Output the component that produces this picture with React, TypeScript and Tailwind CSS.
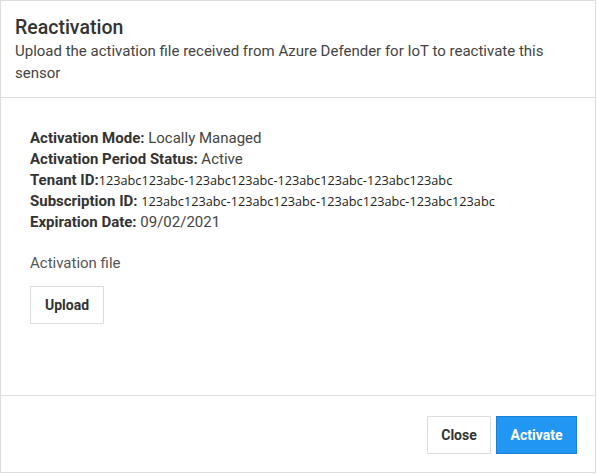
import React from "react";

export default function App() {
  const roboto = { fontFamily: "Roboto, 'Liberation Sans', sans-serif" };
  const mono = { fontFamily: "'Open Sans', 'Noto Sans', sans-serif" };
  return (
    <div className="w-[597px] h-[474px] bg-white" style={roboto}>
      <div className="w-[596px] h-[473px] border border-[#dddddd] flex flex-col">
        <div className="h-[97px] border-b border-[#dddddd] px-[14px] pt-[15px] shrink-0">
          <div className="text-[19.5px] leading-[24px] font-medium text-[#333333]">Reactivation</div>
          <div className="text-[15px] leading-[22px] text-[#444444]">
            Upload the activation file received from Azure Defender for IoT to reactivate this sensor
          </div>
        </div>
        <div className="flex-1 px-[29px] pt-[30px]">
          <div className="text-[15px] leading-[21px] text-[#444444]">
            <div>
              <span className="font-bold text-[#333333]">Activation Mode:</span> Locally Managed
            </div>
            <div>
              <span className="font-bold text-[#333333]">Activation Period Status:</span> Active
            </div>
            <div>
              <span className="font-bold text-[#333333]">Tenant ID:</span>
              <span className="text-[12.7px] text-[#222222]" style={mono}>
                123abc123abc-123abc123abc-123abc123abc-123abc123abc
              </span>
            </div>
            <div>
              <span className="font-bold text-[#333333]">Subscription ID:</span>{" "}
              <span className="text-[12.7px] text-[#222222]" style={mono}>
                123abc123abc-123abc123abc-123abc123abc-123abc123abc
              </span>
            </div>
            <div>
              <span className="font-bold text-[#333333]">Expiration Date:</span> 09/02/2021
            </div>
          </div>
          <div className="mt-[20px] text-[15px] leading-[21px] text-[#555555]">Activation file</div>
          <button className="mt-[12px] w-[74px] h-[38px] border border-[#dddddd] bg-white text-[14px] font-bold text-[#333333]">
            Upload
          </button>
        </div>
        <div className="h-[77px] border-t border-[#dddddd] shrink-0 flex items-center justify-end gap-[5px] pr-[18px] pt-[2px]">
          <button className="w-[64px] h-[38px] border border-[#dddddd] bg-white text-[14px] font-bold text-[#333333]">
            Close
          </button>
          <button className="w-[81px] h-[38px] border border-[#1c7fd6] bg-[#2196f3] text-[14px] font-bold text-white">
            Activate
          </button>
        </div>
      </div>
    </div>
  );
}
